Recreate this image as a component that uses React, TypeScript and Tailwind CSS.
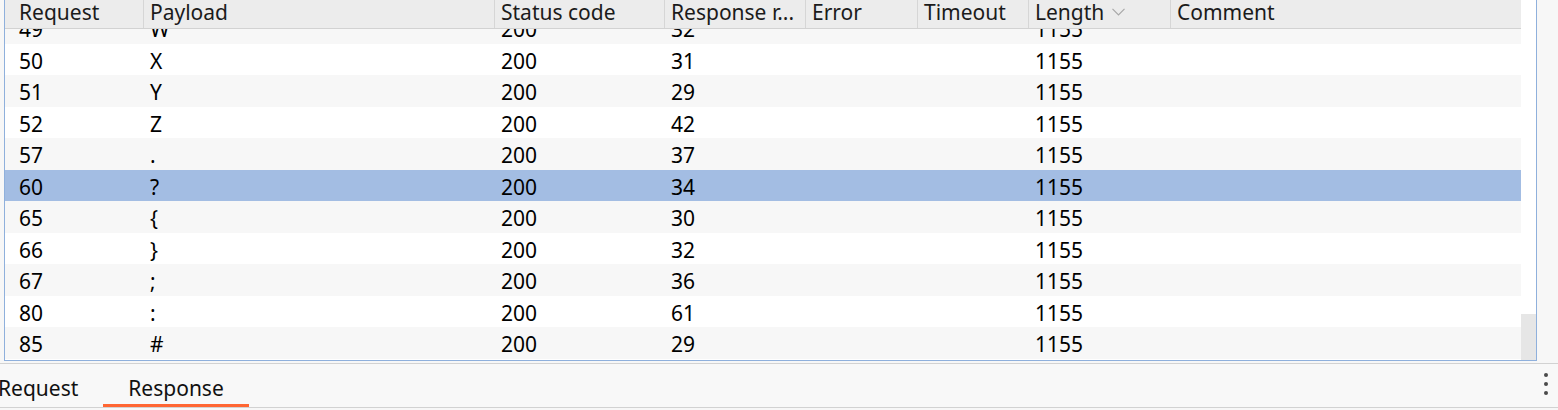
import React from 'react';

type Row = {
  req: string;
  payload: string;
  status: string;
  resp: string;
  length: string;
};

const rows: Row[] = [
  { req: '49', payload: 'W', status: '200', resp: '32', length: '1155' },
  { req: '50', payload: 'X', status: '200', resp: '31', length: '1155' },
  { req: '51', payload: 'Y', status: '200', resp: '29', length: '1155' },
  { req: '52', payload: 'Z', status: '200', resp: '42', length: '1155' },
  { req: '57', payload: '.', status: '200', resp: '37', length: '1155' },
  { req: '60', payload: '?', status: '200', resp: '34', length: '1155' },
  { req: '65', payload: '{', status: '200', resp: '30', length: '1155' },
  { req: '66', payload: '}', status: '200', resp: '32', length: '1155' },
  { req: '67', payload: ';', status: '200', resp: '36', length: '1155' },
  { req: '80', payload: ':', status: '200', resp: '61', length: '1155' },
  { req: '85', payload: '#', status: '200', resp: '29', length: '1155' },
];

const SELECTED = '60';

const cols = 'grid grid-cols-[138px_351px_170px_141px_112px_111px_142px_351px]';

function HeaderCell({ children, first }: { children?: React.ReactNode; first?: boolean }) {
  return (
    <div
      className={`flex items-center h-full pb-[4px] whitespace-nowrap ${
        first ? 'pl-[14px]' : 'pl-[6px] border-l border-[#d6d6d6]'
      }`}
    >
      {children}
    </div>
  );
}

export default function App() {
  return (
    <div
      className="w-[1558px] h-[410px] bg-[#f7f7f7] overflow-hidden text-[21px] leading-none"
      style={{ fontFamily: '"Noto Sans", "Open Sans", sans-serif' }}
    >
      {/* Results table */}
      <div className="pl-[4px]">
        <div className="w-[1533px] h-[361px] flex bg-white border-l border-r border-b border-[#8fb0dc]">
          <div className="w-[1516px] flex flex-col">
            {/* Header */}
            <div className={`${cols} relative z-10 h-[29px] bg-[#ececec] border-b border-[#d2d2d2] text-[#1b1b1b]`}>
              <HeaderCell first>Request</HeaderCell>
              <HeaderCell>Payload</HeaderCell>
              <HeaderCell>Status code</HeaderCell>
              <HeaderCell>Response r...</HeaderCell>
              <HeaderCell>Error</HeaderCell>
              <HeaderCell>Timeout</HeaderCell>
              <HeaderCell>
                Length
                <svg className="ml-[8px] w-[13px] h-[8px]" viewBox="0 0 13 8" fill="none">
                  <path d="M0.5 0.8 L6.5 6.8 L12.5 0.8" stroke="#a8a8a8" strokeWidth="1.2" />
                </svg>
              </HeaderCell>
              <HeaderCell>Comment</HeaderCell>
            </div>

            {/* Rows */}
            <div className="flex-1 overflow-hidden">
              <div className="-mt-[17px]">
                {rows.map((r, i) => {
                  const bg =
                    r.req === SELECTED ? 'bg-[#a3bde3]' : i % 2 === 0 ? 'bg-[#f7f7f7]' : 'bg-white';
                  return (
                    <div key={r.req} className={`${cols} h-[31.5px] pt-[4px] items-center text-black ${bg}`}>
                      <div className="pl-[14px]">{r.req}</div>
                      <div className="pl-[7px]">{r.payload}</div>
                      <div className="pl-[7px]">{r.status}</div>
                      <div className="pl-[7px]">{r.resp}</div>
                      <div />
                      <div />
                      <div className="pl-[7px]">{r.length}</div>
                      <div />
                    </div>
                  );
                })}
              </div>
            </div>
          </div>

          {/* Scrollbar */}
          <div className="flex-1 flex flex-col justify-end bg-white">
            <div className="h-[46px] bg-[#e6e6e6]" />
          </div>
        </div>
      </div>

      {/* Tab bar */}
      <div className="mt-[2px] h-[45px] border-t border-b border-[#d2d2d2] bg-[#f8f8f8] flex items-stretch justify-between">
        <div className="flex -ml-[27px]">
          <div className="px-[25px] flex items-center pt-[9px] border-b-[3px] border-transparent text-[#111]">
            Request
          </div>
          <div className="px-[25px] flex items-center pt-[9px] border-b-[3px] border-[#ff6633] text-[#111]">
            Response
          </div>
        </div>
        <div className="flex flex-col items-center justify-center gap-[5px] pr-[10px] pb-[3px]">
          <span className="w-[4px] h-[4px] rounded-full bg-[#4a4a4a]" />
          <span className="w-[4px] h-[4px] rounded-full bg-[#4a4a4a]" />
          <span className="w-[4px] h-[4px] rounded-full bg-[#4a4a4a]" />
        </div>
      </div>
    </div>
  );
}
